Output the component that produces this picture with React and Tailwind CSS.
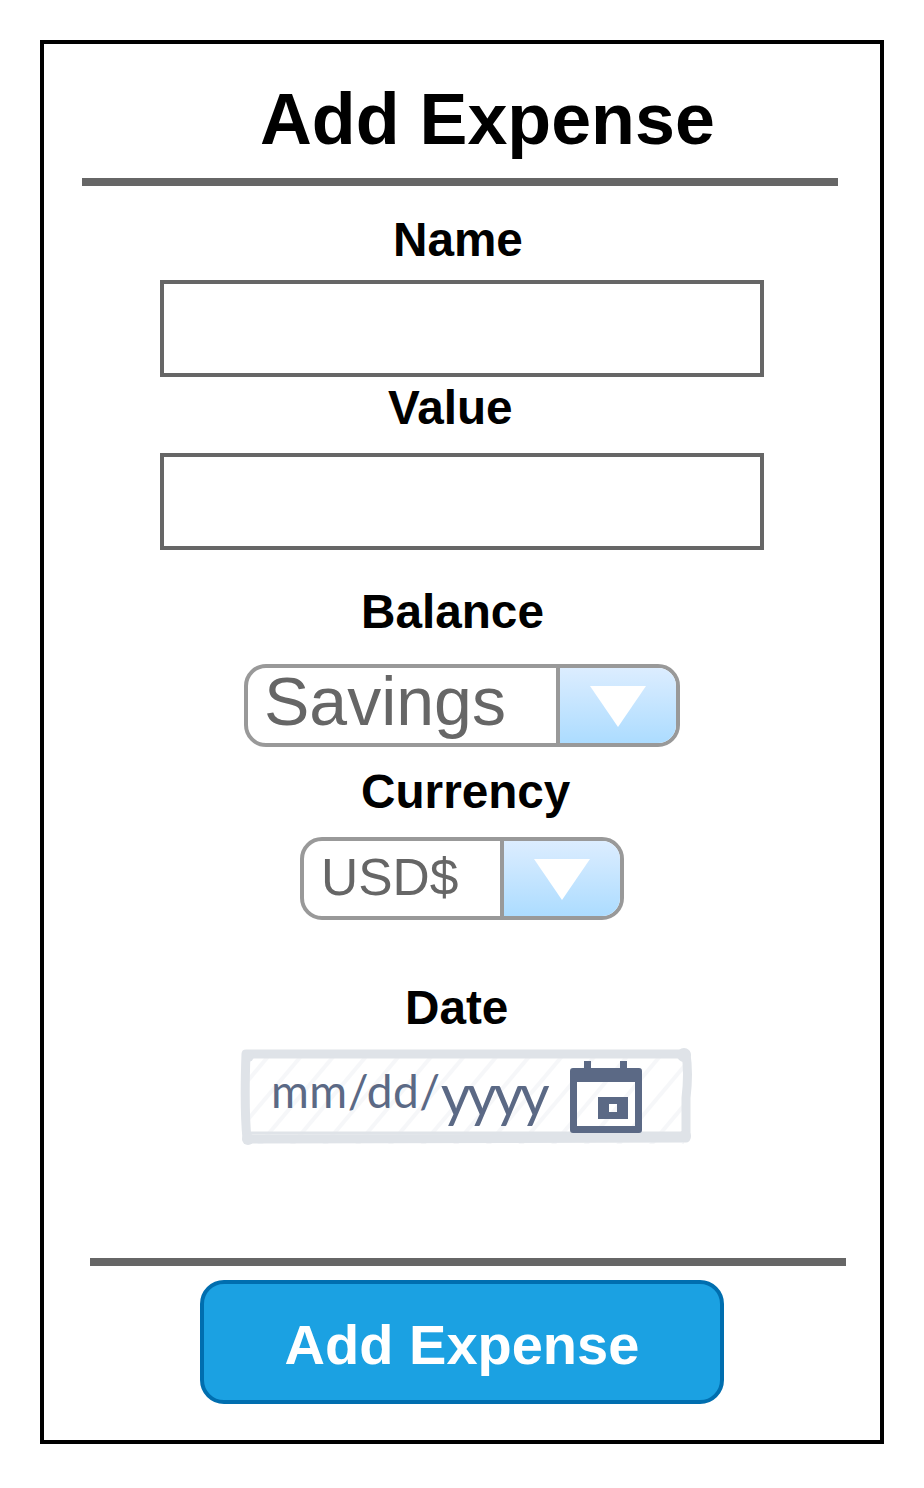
const font = { fontFamily: '"Liberation Sans", Arial, sans-serif' };

function Label({ children, className }) {
  return <div className={`self-start text-[47.7px] leading-[48px] font-bold text-black whitespace-nowrap h-12 ${className}`}>{children}</div>;
}

function Field({ className }) {
  return <div className={`self-start ml-[116px] w-[604px] h-[97px] border-4 border-[#666666] bg-white ${className}`} />;
}

function Select({ text, className, textClass, btnClass }) {
  return (
    <div className={`self-start h-[83px] flex border-4 border-[#999999] rounded-[22px] overflow-hidden bg-white ${className}`}>
      <div className={`flex-1 text-[#666666] whitespace-nowrap ${textClass}`}>{text}</div>
      <div className={`h-full border-l-[4px] border-[#999999] bg-gradient-to-b from-[#dcedff] to-[#acdcff] flex justify-center pt-[18px] ${btnClass}`}>
        <div className="w-0 h-0 border-x-[28px] border-t-[41px] border-x-transparent border-t-white" />
      </div>
    </div>
  );
}

function DateField() {
  return (
    <div className="relative self-start ml-[196px] mt-[17px] w-[452px] h-[98px]">
      <svg className="absolute inset-0" width="452" height="98" viewBox="0 0 452 98" fill="none">
        <defs>
          <pattern id="hatch" width="25" height="25" patternUnits="userSpaceOnUse" patternTransform="rotate(40)">
            <rect width="4" height="25" fill="#f6f7f9" />
          </pattern>
        </defs>
        <rect x="8" y="8" width="436" height="88" fill="url(#hatch)" />
        <path d="M6 6 L446 6 Q449 25 446 50 L446 90 L7 91 Q4 60 6 6 Z" stroke="#dfe3e8" strokeWidth="9" strokeLinecap="round" strokeLinejoin="round" />
        <path d="M8 85 L446 85" stroke="#dfe3e8" strokeWidth="3" />
        <circle cx="8" cy="8" r="6" fill="#dfe3e8" />
        <circle cx="444" cy="7" r="7" fill="#dfe3e8" />
        <circle cx="8" cy="91" r="6" fill="#dfe3e8" />
        <circle cx="445" cy="88" r="6" fill="#dfe3e8" />
      </svg>
      <div className="absolute left-[31px] top-[11px] flex items-start text-[#5b6985] whitespace-nowrap" style={{ fontFamily: 'Lato, sans-serif' }}>
        <span className="text-[46px] leading-[64px] font-normal tracking-[0.5px]">mm/dd/</span>
        <span className="text-[58px] leading-[64px] mt-[3px] font-normal tracking-[-3.5px]">yyyy</span>
      </div>
      <svg className="absolute left-[330px] top-[13px]" width="72" height="72" viewBox="0 0 72 72" fill="#5b6985">
        <path d="M14 0h7v7h29v-7h7v7h12a3 3 0 0 1 3 3v59a3 3 0 0 1-3 3H3a3 3 0 0 1-3-3V10a3 3 0 0 1 3-3h11z M7 21v44h58V21z" fillRule="evenodd" />
        <path d="M28 36h30v22H28z M39 43v8h8v-8z" fillRule="evenodd" />
      </svg>
    </div>
  );
}

export default function App() {
  return (
    <div className="w-[924px] h-[1488px] bg-white pt-10 pl-10" style={font}>
      <div className="w-[844px] h-[1404px] border-4 border-black flex flex-col bg-white">
        <h1 className="self-start ml-[216px] mt-[39px] h-[72px] text-[71.8px] leading-[72px] font-bold text-black whitespace-nowrap">Add Expense</h1>
        <div className="self-start ml-[38px] mt-[23px] w-[756px] h-2 bg-[#666666]" />
        <Label className="ml-[349px] mt-[30px] -mb-[1px]">Name</Label>
        <Field className="mt-[17px]" />
        <Label className="ml-[344px] mt-[7px] -mb-[1px]">Value</Label>
        <Field className="mt-[22px]" />
        <Label className="ml-[317px] mt-[38px] -mb-[1px]">Balance</Label>
        <Select
          text="Savings"
          className="ml-[200px] mt-[29px] w-[436px]"
          textClass="text-[68px] leading-[66px] pl-[16px]"
          btnClass="w-[120px]"
        />
        <Label className="ml-[317px] mt-[21px] -mb-[1px]">Currency</Label>
        <Select
          text="USD$"
          className="ml-[256px] mt-[22px] w-[324px]"
          textClass="text-[51.5px] leading-none pl-[17px] pt-[11px]"
          btnClass="w-[120px]"
        />
        <Label className="ml-[361px] mt-[64px] -mb-[1px]">Date</Label>
        <DateField />
        <div className="self-start ml-[46px] mt-[112px] w-[756px] h-2 bg-[#666666]" />
        <button className="self-start ml-[156px] mt-[14px] w-[524px] h-[124px] border-4 border-[#006eaf] rounded-[24px] bg-[#1ba1e2] text-white text-[56px] font-bold leading-none pt-[5px]">
          Add Expense
        </button>
      </div>
    </div>
  );
}
